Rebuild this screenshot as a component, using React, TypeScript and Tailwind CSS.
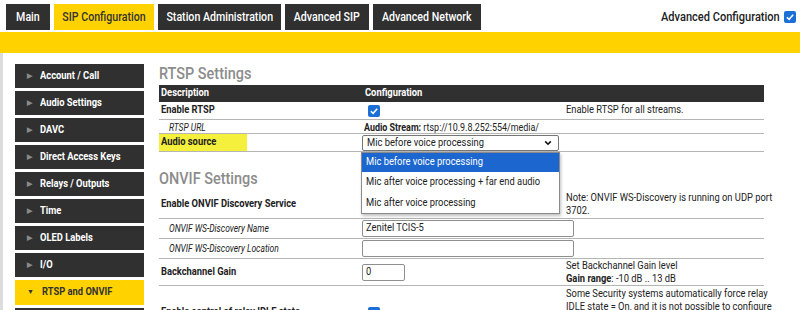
const tabs = [
  { label: "Main", w: "w-[44px]" },
  { label: "SIP Configuration", w: "w-[100px]", active: true },
  { label: "Station Administration", w: "w-[123px]" },
  { label: "Advanced SIP", w: "w-[84px]" },
  { label: "Advanced Network", w: "w-[108px]" },
];

const menu = [
  "Account / Call",
  "Audio Settings",
  "DAVC",
  "Direct Access Keys",
  "Relays / Outputs",
  "Time",
  "OLED Labels",
  "I/O",
];

// narrow text: the page uses a condensed face
function N({ children, origin = "origin-left" }: { children: React.ReactNode; origin?: string }) {
  return <span className={`inline-block scale-x-[0.85] whitespace-nowrap ${origin}`}>{children}</span>;
}

function Lines({ lines }: { lines: React.ReactNode[] }) {
  return (
    <div className="pl-[4px] leading-[13px]">
      {lines.map((l, i) => (
        <div key={i} className="h-[13px]">
          <N>{l}</N>
        </div>
      ))}
    </div>
  );
}

function Check() {
  return (
    <span className="inline-flex h-[12px] w-[12px] items-center justify-center rounded-[2px] bg-[#1d6fd8]">
      <svg viewBox="0 0 12 12" className="h-[10px] w-[10px]">
        <path d="M2.2 6.3 L4.9 8.8 L9.8 3.2" fill="none" stroke="white" strokeWidth="1.8" />
      </svg>
    </span>
  );
}

function Row({ children, className = "" }: { children: React.ReactNode; className?: string }) {
  return (
    <div className={`grid grid-cols-[203px_200px_202px] border-b border-[#b5b5b5] ${className}`}>{children}</div>
  );
}

export default function App() {
  return (
    <div className="h-[310px] w-[800px] overflow-hidden bg-white font-['Roboto',sans-serif] text-[11px] text-[#222]">
      {/* tabs */}
      <div className="flex h-[32px] items-start pt-[4px]">
        <div className="ml-[6px] flex gap-[4px]">
          {tabs.map((t) => (
            <div
              key={t.label}
              className={`flex h-[26px] items-center justify-center text-[12.5px] font-medium ${t.w} ${
                t.active ? "bg-[#ffd200] text-[#333]" : "bg-[#303030] text-white"
              }`}
            >
              <N origin="origin-center">{t.label}</N>
            </div>
          ))}
        </div>
        <div className="ml-auto mr-[4px] mt-[3px] flex items-center gap-[4px] text-[13px] font-medium text-[#222]">
          <N origin="origin-right">Advanced Configuration</N>
          <Check />
        </div>
      </div>
      <div className="h-[21px] bg-[#ffd200]" />

      <div className="flex border-l-[3px] border-[#dcdcdc]">
        {/* sidebar */}
        <div className="ml-[12px] mt-[11px] flex w-[129px] flex-col gap-[3px]">
          {menu.map((m) => (
            <div key={m} className="flex h-[24px] items-center bg-[#303030] pl-[12px] text-[11px] font-bold text-white">
              <span className="mr-[8px] text-[7px] text-[#8a8a8a]">▶</span>
              <N>{m}</N>
            </div>
          ))}
          <div className="flex h-[25px] items-center bg-[#ffd200] pl-[12px] text-[11px] font-bold text-[#333]">
            <span className="mr-[8px] text-[7px] text-[#333]">▼</span>
            <N>RTSP and ONVIF</N>
          </div>
          <div className="h-[24px] bg-[#303030]" />
        </div>

        {/* content */}
        <div className="ml-[15px] mt-[9px] w-[605px]">
          <div className="h-[23px] text-[17px] font-medium leading-[23px] text-[#8c8c8c]">
            <N>RTSP Settings</N>
          </div>
          <div className="grid h-[17px] grid-cols-[203px_200px_202px] items-center bg-[#303030] text-[11px] font-bold text-white">
            <span className="pl-[2px]">
              <N>Description</N>
            </span>
            <span className="pl-[3px]">
              <N>Configuration</N>
            </span>
            <span />
          </div>
          <Row className="h-[18px] items-center">
            <span className="pl-[2px] font-bold">
              <N>Enable RTSP</N>
            </span>
            <span className="flex pl-[6px]">
              <Check />
            </span>
            <span className="pl-[4px]">
              <N>Enable RTSP for all streams.</N>
            </span>
          </Row>
          <Row className="h-[14px] items-center text-[10px]">
            <span className="pl-[10px] italic">
              <N>RTSP URL</N>
            </span>
            <span className="col-span-2 pl-[2px] text-[10.5px]">
              <N>
                <b>Audio Stream:</b> rtsp://10.9.8.252:554/media/
              </N>
            </span>
          </Row>
          <Row className="h-[18px] items-stretch">
            <span className="flex w-[88px] items-center bg-[#f4f03c] pl-[2px] font-bold">
              <N>Audio source</N>
            </span>
            <div className="relative">
              <div className="mt-[1px] flex h-[16px] w-[197px] items-center justify-between rounded-[2px] border border-[#767676] bg-white pl-[4px] pr-[6px]">
                <N>Mic before voice processing</N>
                <svg viewBox="0 0 10 10" className="h-[8px] w-[8px]">
                  <path d="M1.5 3 L5 6.5 L8.5 3" fill="none" stroke="#111" strokeWidth="2" />
                </svg>
              </div>
              <div className="absolute left-[-1px] top-[18px] z-10 w-[199px] border border-[#8a8a8a] bg-white shadow-[1px_2px_3px_rgba(0,0,0,0.25)]">
                <div className="flex h-[19px] items-center bg-[#1b66cf] pl-[4px] text-white">
                  <N>Mic before voice processing</N>
                </div>
                <div className="flex h-[21px] items-center pl-[4px]">
                  <N>Mic after voice processing + far end audio</N>
                </div>
                <div className="flex h-[20px] items-center pl-[4px]">
                  <N>Mic after voice processing</N>
                </div>
              </div>
            </div>
            <span />
          </Row>

          <div className="mt-[14px] h-[24px] text-[17px] font-medium leading-[24px] text-[#8c8c8c]">
            <N>ONVIF Settings</N>
          </div>
          <Row className="h-[29px] items-center">
            <span className="pl-[2px] font-bold">
              <N>Enable ONVIF Discovery Service</N>
            </span>
            <span />
            <Lines lines={["Note: ONVIF WS-Discovery is running on UDP port", "3702."]} />
          </Row>
          <Row className="h-[20px] items-center text-[10px]">
            <span className="pl-[10px] italic">
              <N>ONVIF WS-Discovery Name</N>
            </span>
            <div className="col-span-2">
              <div className="flex h-[17px] w-[212px] items-center rounded-[2px] border border-[#8f8f8f] pl-[3px] text-[11px]">
                <N>Zenitel TCIS-5</N>
              </div>
            </div>
          </Row>
          <Row className="h-[20px] items-center text-[10px]">
            <span className="pl-[10px] italic">
              <N>ONVIF WS-Discovery Location</N>
            </span>
            <div className="col-span-2">
              <div className="h-[17px] w-[212px] rounded-[2px] border border-[#8f8f8f]" />
            </div>
          </Row>
          <Row className="h-[27px] items-center">
            <span className="pl-[2px] font-bold">
              <N>Backchannel Gain</N>
            </span>
            <div>
              <div className="flex h-[17px] w-[43px] items-center rounded-[2px] border border-[#8f8f8f] pl-[3px]">
                <N>0</N>
              </div>
            </div>
            <Lines
              lines={[
                "Set Backchannel Gain level",
                <>
                  <b>Gain range</b>: -10 dB .. 13 dB
                </>,
              ]}
            />
          </Row>
          <Row className="h-[54px] items-center">
            <span className="pl-[2px] font-bold">
              <N>Enable control of relay IDLE state</N>
            </span>
            <span className="flex pl-[6px]">
              <Check />
            </span>
            <Lines
              lines={[
                "Some Security systems automatically force relay",
                "IDLE state = On, and it is not possible to configure",
                "this in the VMS. Enable to let the station control",
                "the relay IDLE state.",
              ]}
            />
          </Row>
        </div>
      </div>
    </div>
  );
}
